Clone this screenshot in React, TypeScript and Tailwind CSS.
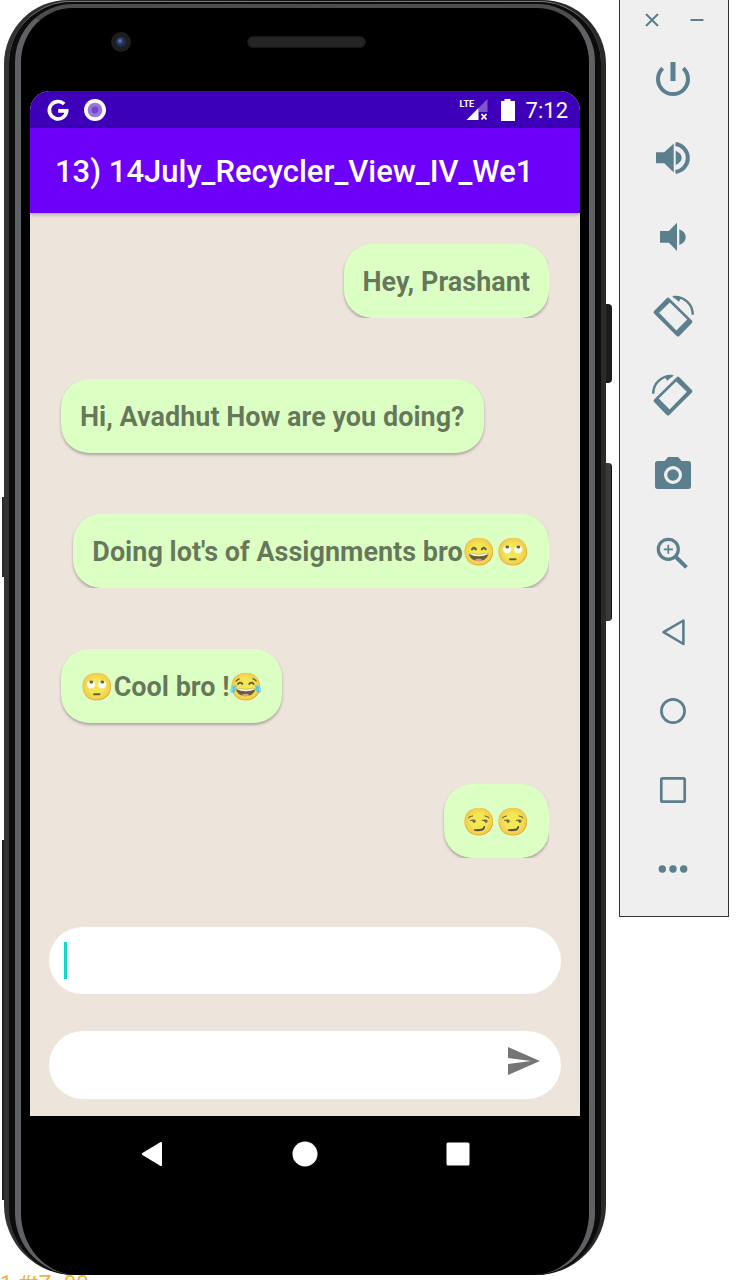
import type { ReactNode } from "react";

type Message = { before?: string; text?: string; after?: string; mine: boolean };

const messages: Message[] = [
  { text: "Hey, Prashant", mine: true },
  { text: "Hi, Avadhut How are you doing?", mine: false },
  { text: "Doing lot's of Assignments bro", after: "😄🙄", mine: true },
  { before: "🙄", text: "Cool bro !", after: "😂", mine: false },
  { after: "😏😏", mine: true },
];

const tablet = (
  <>
    <path
      fillRule="evenodd"
      d="M17.2 6.2Q18.5 5 19.8 6.2L42.4 28.4Q43.6 29.7 42.4 31L29.8 44Q28.5 45.2 27.2 44L4.6 21.6Q3.4 20.3 4.6 19ZM20.3 10.5L9.6 20.8L26.9 38.6L37.7 27.4Z"
    />
    <path d="M22.4 4L29.4 9.8L32 5.4Z" />
    <path d="M24 5C34 4 43.3 12 43.3 22.8" fill="none" stroke="currentColor" strokeWidth="2.4" />
  </>
);

const tools: { label: string; art: ReactNode }[] = [
  {
    label: "Power",
    art: (
      <>
        <path d="M13.2 13.2A15 15 0 1 0 33.8 13.2" fill="none" stroke="currentColor" strokeWidth="4" />
        <rect x="21" y="7" width="5" height="19" />
      </>
    ),
  },
  {
    label: "Volume up",
    art: (
      <>
        <path d="M6.5 18.2H14.8L24.2 9.5V38.5L14.8 29.2H6.5ZM26.2 16.7Q32.2 19.2 32.2 23.8T26.2 30.9Z" />
        <path d="M26 10.1A14 14 0 0 1 26 37.9" fill="none" stroke="currentColor" strokeWidth="4" />
      </>
    ),
  },
  {
    label: "Volume down",
    art: <path d="M10.5 18H19.3L27.5 9.7V38L19.3 29.7H10.5ZM29.8 16.3Q36.2 19 36.2 24.2T29.8 32Z" />,
  },
  { label: "Rotate left", art: tablet },
  { label: "Rotate right", art: <g transform="translate(47 0) scale(-1 1)">{tablet}</g> },
  {
    label: "Take screenshot",
    art: (
      <>
        <path
          fillRule="evenodd"
          d="M18.5 7H28.7L32 11H38.8Q41.5 11 41.5 13.7V36.3Q41.5 39 38.8 39H8.2Q5.5 39 5.5 36.3V13.7Q5.5 11 8.2 11H15.2ZM23.5 16A9 9 0 1 0 23.5 34A9 9 0 1 0 23.5 16Z"
        />
        <circle cx="23.5" cy="25" r="5.8" />
      </>
    ),
  },
  {
    label: "Zoom",
    art: (
      <g fill="none" stroke="currentColor">
        <circle cx="18.8" cy="20.3" r="10" strokeWidth="3.2" />
        <path d="M14.3 20.3H23.4M18.8 15.8V24.8" strokeWidth="1.7" />
        <path d="M26.4 28L37 38.4" strokeWidth="4" />
      </g>
    ),
  },
  {
    label: "Back",
    art: (
      <path d="M14 24.2L33.9 12.5V36Z" fill="none" stroke="currentColor" strokeWidth="2.6" strokeLinejoin="round" />
    ),
  },
  {
    label: "Home",
    art: <circle cx="23.5" cy="24" r="11.6" fill="none" stroke="currentColor" strokeWidth="2.7" />,
  },
  {
    label: "Overview",
    art: (
      <rect x="11.8" y="12.3" width="23.4" height="23.4" rx="1.2" fill="none" stroke="currentColor" strokeWidth="2.7" />
    ),
  },
  {
    label: "More",
    art: (
      <>
        <circle cx="12.8" cy="24" r="3.7" />
        <circle cx="23.5" cy="24" r="3.7" />
        <circle cx="34.2" cy="24" r="3.7" />
      </>
    ),
  },
];

function StatusBar() {
  return (
    <div className="flex h-[37px] items-center justify-between bg-[#3d00b8] pr-3 pl-4 text-white">
      <div className="flex items-center gap-[13px]">
        <svg className="size-6" viewBox="0 0 24 24" aria-label="Google" role="img">
          <path d="M18.2 6.1A8.7 8.7 0 1 0 20.7 12.9H12.2" fill="none" stroke="currentColor" strokeWidth="3.6" />
        </svg>
        <svg className="size-6" viewBox="0 0 24 24" aria-label="Recording" role="img">
          <circle cx="12" cy="12" r="11" fill="#fff" />
          <circle cx="12" cy="12" r="7.3" fill="#9a74dd" />
          <circle cx="12" cy="12" r="3.4" fill="#7445cf" />
        </svg>
      </div>
      <div className="flex items-center">
        <div className="relative h-6 w-7">
          <span className="absolute top-0 left-0 font-['Liberation_Sans_Narrow',Roboto,sans-serif] text-[9px] leading-3 font-bold">
            LTE
          </span>
          <svg className="size-full" viewBox="0 0 28 24" aria-label="No signal" role="img">
            <path d="M27.5 1V14H18.5V10Z" fill="#7f56cf" />
            <path d="M18.5 10V22H6.5Z" fill="currentColor" />
            <path d="M21.5 16L26.5 21.5M26.5 16L21.5 21.5" stroke="currentColor" strokeWidth="1.8" />
          </svg>
        </div>
        <svg className="ml-3 h-6 w-4" viewBox="0 0 16 24" aria-label="Battery" role="img">
          <path d="M4.5 1H10.5V3H15V23H1V3H4.5Z" fill="currentColor" />
        </svg>
        <span className="ml-2.5 pt-0.5 text-[22px] leading-6">7:12</span>
      </div>
    </div>
  );
}

function Bubble({ before, text, after, mine }: Message) {
  return (
    <li className={mine ? "flex justify-end overflow-hidden pl-1" : "flex justify-start"}>
      <p className="flex h-[74px] items-center rounded-[28px] bg-[#dcffc3] px-[19px] pt-[3px] font-[Roboto,'Noto_Color_Emoji',sans-serif] text-[27px] font-bold whitespace-nowrap text-black/54 shadow-[0_2px_3px_rgba(0,0,0,0.28)]">
        {before && <span className="text-black/75">{before}</span>}
        {text}
        {after && <span className="text-black/75">{after}</span>}
      </p>
    </li>
  );
}

function Phone() {
  return (
    <section
      aria-label="Phone"
      className="relative min-w-0 flex-1 rounded-t-[64px] rounded-b-[70px] bg-linear-to-r from-[#333] via-[#111] to-[#2b2b2b] px-[5px] pt-px"
    >
      <div className="absolute top-[497px] -left-0.5 h-20 w-0.5 bg-[#2b2b2b]" />
      <div className="absolute top-[840px] -left-0.5 h-[360px] w-0.5 bg-[#222]" />
      <div className="absolute top-[304px] -right-1.5 h-[79px] w-1.5 rounded-r-sm bg-[#1c1c1c]" />
      <div className="absolute top-[463px] -right-1.5 h-[158px] w-1.5 rounded-r-sm border-r border-[#111] bg-[#3a3a3a]" />
      <div className="rounded-t-[62px] rounded-b-[66px] border-t border-[#777] bg-[#0c0c0c] px-[6px] pt-0.5">
        <div className="rounded-t-[58px] rounded-b-[62px] border-x-6 border-t-4 border-x-[#5f6165] border-t-[#4c4d4f] bg-black px-[9px] pb-[84px]">
          <div className="flex h-[83px] items-start pt-6">
            <div className="ml-[81px] flex size-5 items-center justify-center rounded-full bg-[#1e1e1e]">
              <div className="size-2.5 rounded-full bg-[radial-gradient(circle_at_40%_40%,#6f86b8_0,#24365f_35%,#151f3a_100%)]" />
            </div>
            <div className="mt-1 ml-[116px] h-3 w-[119px] rounded-full border border-[#161616] bg-[#242424]" />
          </div>

          <div className="overflow-hidden rounded-t-[20px] bg-[#ede4dc]">
            <StatusBar />
            <header className="relative flex h-[85px] items-center bg-[#6d00f8] pt-0.5 pl-[25px] shadow-[0_1px_4px_rgba(0,0,0,0.35)]">
              <h1 className="text-[31px] leading-9 font-medium whitespace-nowrap text-white">
                13) 14July_Recycler_View_IV_We1
              </h1>
            </header>

            <ul className="flex flex-col gap-[61px] px-[31px] pt-[31px]">
              {messages.map((m, i) => (
                <Bubble key={i} {...m} />
              ))}
            </ul>

            <form
              className="mt-[69px] flex flex-col gap-[37px] px-[19px] pb-[17px]"
              onSubmit={(e) => e.preventDefault()}
            >
              <div className="relative">
                <input
                  type="text"
                  aria-label="Name"
                  className="block h-[67px] w-full rounded-[34px] bg-white px-4 text-[27px] outline-none"
                />
                <div className="absolute top-[15px] left-[15px] h-[37px] w-[3px] bg-[#10d9c4]" />
              </div>
              <div className="flex h-[68px] items-center rounded-[34px] bg-white pr-[19px]">
                <input
                  type="text"
                  aria-label="Message"
                  className="h-full min-w-0 flex-1 rounded-[34px] bg-transparent px-4 text-[27px] outline-none"
                />
                <button type="submit" aria-label="Send" className="mb-2 text-[#757575]">
                  <svg className="h-7 w-9" viewBox="0 0 36 28" fill="currentColor">
                    <path d="M2 0L34 14L2 28V17L25 14L2 11Z" />
                  </svg>
                </button>
              </div>
            </form>
          </div>

          <nav className="grid h-[75px] grid-cols-3 place-items-center px-[46px] text-white">
            <button type="button" aria-label="Back">
              <svg className="size-7" viewBox="0 0 28 28" fill="currentColor">
                <path d="M4.4 12.9L22.6 2.1Q24 1.6 24 3V25Q24 26.4 22.6 25.9L4.4 15.1Q2.8 14 4.4 12.9Z" />
              </svg>
            </button>
            <button type="button" aria-label="Home">
              <svg className="size-7" viewBox="0 0 28 28" fill="currentColor">
                <circle cx="14" cy="14" r="12.5" />
              </svg>
            </button>
            <button type="button" aria-label="Recent apps">
              <svg className="size-7" viewBox="0 0 28 28" fill="currentColor">
                <rect x="2.5" y="2.5" width="23" height="23" rx="1.5" />
              </svg>
            </button>
          </nav>
        </div>
      </div>
    </section>
  );
}

function Toolbar() {
  return (
    <aside className="w-[110px] shrink-0 border-x border-b border-[#333] bg-[#efefef] pb-2 text-[#5b7f8d]">
      <div className="flex h-[39px] justify-center">
        <button type="button" aria-label="Close" className="flex w-[45px] items-center justify-center">
          <svg className="size-4" viewBox="0 0 16 16" fill="none" stroke="currentColor" strokeWidth="2">
            <path d="M2 2L14 14M14 2L2 14" />
          </svg>
        </button>
        <button type="button" aria-label="Minimize" className="flex w-[45px] items-center justify-center">
          <svg className="size-4" viewBox="0 0 16 16" fill="none" stroke="currentColor" strokeWidth="2">
            <path d="M1.5 8H14.5" />
          </svg>
        </button>
      </div>
      {tools.map((t) => (
        <button
          key={t.label}
          type="button"
          aria-label={t.label}
          className="flex h-[79px] w-full items-center justify-center"
        >
          <svg className="size-12" viewBox="0.5 0 48 48" fill="currentColor">
            {t.art}
          </svg>
        </button>
      ))}
    </aside>
  );
}

export default function App() {
  return (
    <main className="bg-white font-[Roboto,sans-serif]">
      <div className="flex items-start gap-[13px] pr-3.5 pl-1">
        <Phone />
        <Toolbar />
      </div>
      <div className="h-1.5 overflow-hidden text-[22px] leading-[18px] text-[#f2b233]">1 #tZ=00</div>
    </main>
  );
}
